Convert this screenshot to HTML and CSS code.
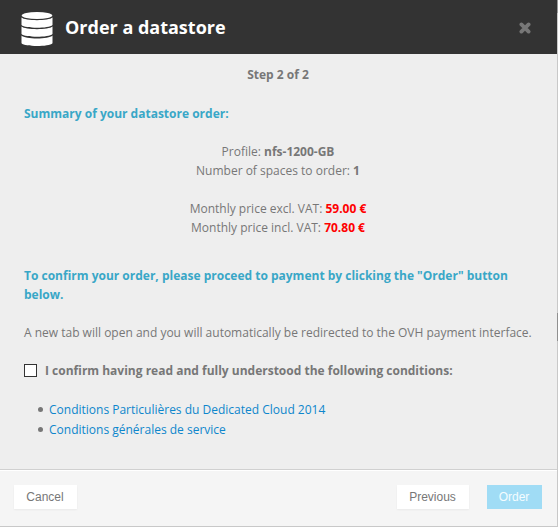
FILE: index.html
```
<!DOCTYPE html>
<html lang="en">
<head>
<meta charset="utf-8">
<title>Order a datastore</title>
<link rel="stylesheet" href="styles.css">
</head>
<body>
<div class="page">
<section class="modal">
  <header class="header">
    <svg class="logo" width="32" height="35" viewBox="0 0 32 35" fill="#fff">
      <ellipse cx="16" cy="3.500" rx="15.300" ry="3.500"/>
      <path d="M.5 5.500C4 9 28 9 31.500 5.500V13C28 16.700 4 16.700 .5 13Z"/>
      <path d="M.5 14.500C4 18 28 18 31.500 14.500V22C28 25.700 4 25.700 .5 22Z"/>
      <path d="M.5 23.500C4 27.500 28 27.500 31.500 23.500V31.200C28 34.900 4 34.900 .5 31.200Z"/>
    </svg>
    <h1 class="title">Order a datastore</h1>
    <svg class="close" width="12" height="12" viewBox="0 0 12 12"><path d="M2.400 2.400l7.200 7.200M9.600 2.400l-7.200 7.200" stroke="#777" stroke-width="3.800" stroke-linecap="round"/></svg>
  </header>
  <main class="content">
    <p class="center step"><b>Step 2 of 2</b></p>
    <p class="accent summary">Summary of your datastore order:</p>
    <p class="center">Profile: <b class="profile">nfs-1200-GB</b><br>Number of spaces to order: <b>1</b></p>
    <p class="center">Monthly price excl. VAT: <b class="price">59.00 €</b><br>Monthly price incl. VAT: <b class="price">70.80 €</b></p>
    <p class="accent confirm">To confirm your order, please proceed to payment by clicking the "Order" button<br>below.</p>
    <p class="notice">A new tab will open and you will automatically be redirected to the OVH payment interface.</p>
    <label class="check"><input type="checkbox"><b>I confirm having read and fully understood the following conditions:</b></label>
    <ul class="links">
      <li><a href="#">Conditions Particulières du Dedicated Cloud 2014</a></li>
      <li><a href="#">Conditions générales de service</a></li>
    </ul>
  </main>
  <footer class="footer">
    <button class="btn cancel">Cancel</button>
    <button class="btn previous">Previous</button>
    <button class="btn order">Order</button>
  </footer>
</section>
<div class="edge"><div class="edge-top"></div><div class="edge-mark"></div></div>
</div>
</body>
</html>
```
FILE: styles.css
```
* { box-sizing: border-box; }
body { margin: 0; background: #eee; overflow: hidden; }
.page { display: flex; width: 558px; height: 527px; }
.modal {
  display: flex; flex-direction: column; width: 557px; height: 527px;
  border-bottom: 1px solid #c8c8c8; background: #eee;
  font: 12px/19px "Open Sans", sans-serif; color: #777;
}
.edge { width: 1px; background: #c8c8c8; }
.edge-top { height: 13px; background: #999; }
.edge-mark { height: 28px; margin-top: 300px; background: #909090; }
.header { display: flex; align-items: flex-start; height: 54px; padding: 12px 26px 0 21px; background: #333; }
.title { margin: 3px auto 0 12px; font-size: 18px; line-height: 25px; font-weight: 700; color: #fff; white-space: nowrap; }
.close { margin-top: 10px; }
.content { flex: 1; padding: 11px 25px 0 24px; white-space: nowrap; }
p { margin: 0 0 19px; }
.step { margin-bottom: 20px; }
.center { text-align: center; }
b, .accent { font-weight: 700; }
.accent { color: #39a7c7; }
.price { color: #f00; }
.confirm { margin-top: 29px; }
.check { display: flex; align-items: center; height: 19px; }
.check input { appearance: none; width: 13px; height: 13px; margin: 0 8px 0 0; border: 1px solid #333; background: #fff; }
.links { margin: 19px 0 0; padding: 0 0 0 12px; list-style: none; }
.links li { display: flex; align-items: center; height: 20px; }
.links li::before { content: ""; width: 5px; height: 5px; margin: 0 6px 0 2px; border-radius: 50%; background: #777; }
.links a { color: #0d86cc; text-decoration: none; }
.footer { display: flex; height: 57px; padding: 14px 15px 0 14px; border-top: 1px solid #d0d0d0; box-shadow: inset 0 1px #fff; background: #f5f5f5; }
.btn { height: 24px; padding: 0 1px 0 0; border: 0; background: #fff; box-shadow: 0 1px 2px #0000000d; color: #777; font: 12px/24px "Liberation Sans", sans-serif; }
.footer .btn { margin-top: 1px; }
.cancel { width: 63px; }
.previous { width: 72px; margin-left: auto; }
.order { width: 55px; margin-left: 18px; background: #a0dcf5; color: #f4fcff; box-shadow: none; }
```
